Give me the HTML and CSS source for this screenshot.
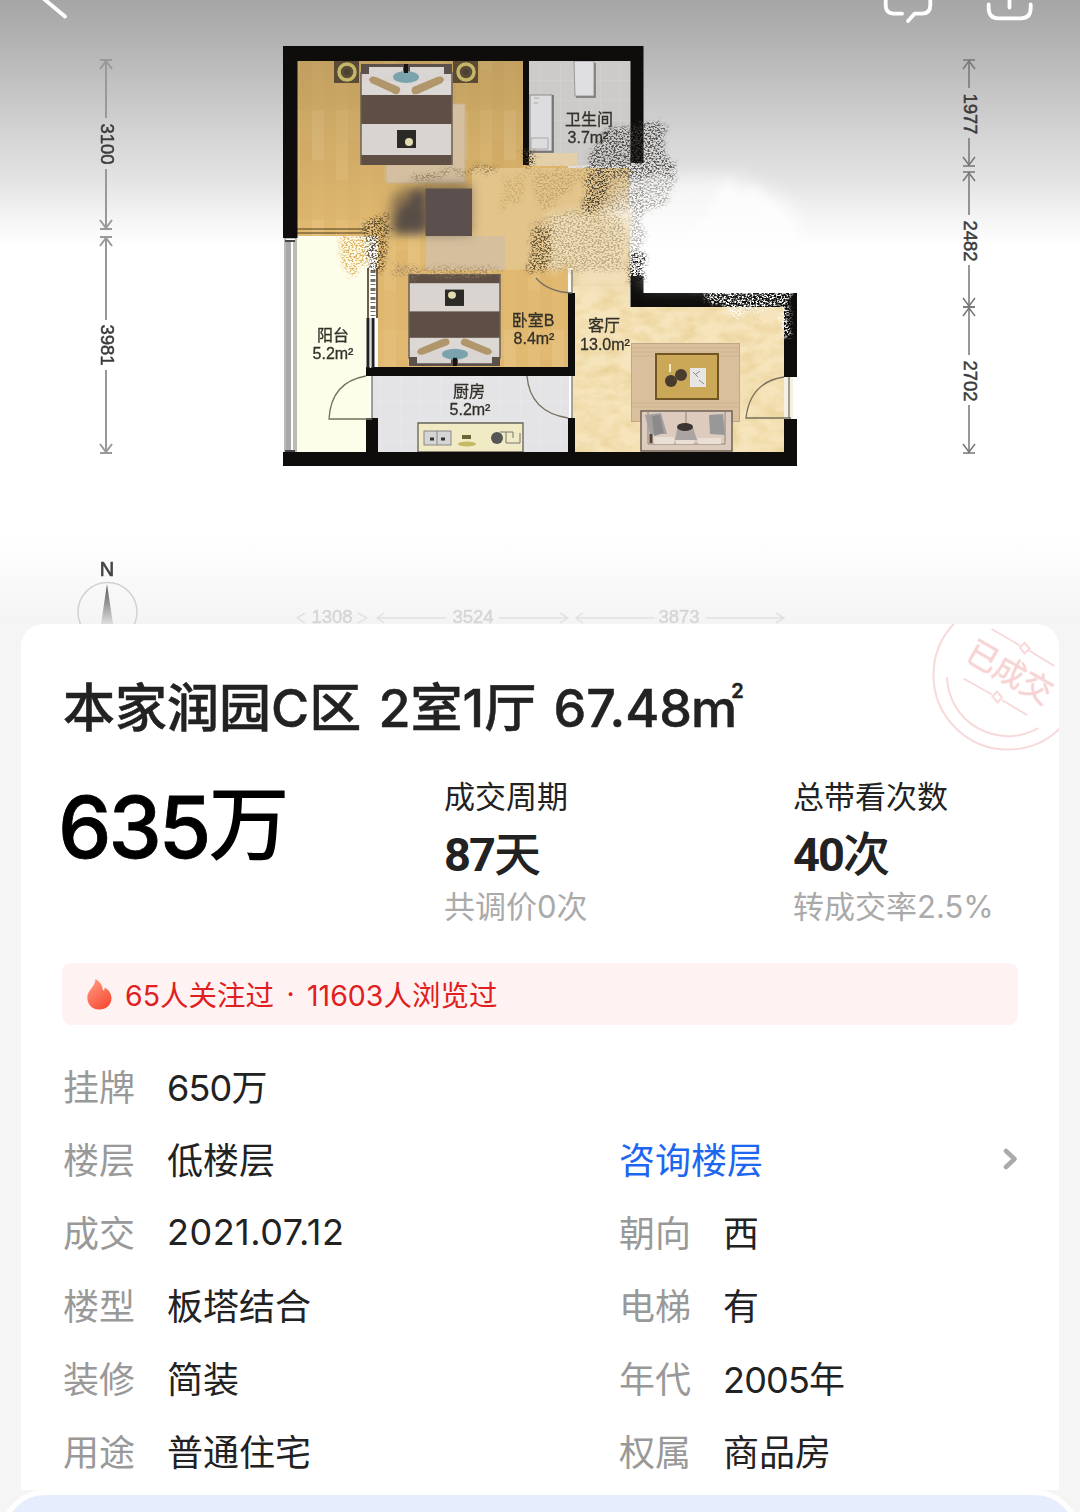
FILE: index.html
```
<!DOCTYPE html>
<html lang="zh-CN">
	<head>
		<meta charset="utf-8">
		<title>本家润园C区 2室1厅 67.48㎡</title>
		<link rel="stylesheet" href="styles.css">
	</head>
	<body>

		<!--
			Floor plan with the navigation icons on top
		-->

		<header class="plan">
			<svg class="plan-svg" width="1080" height="624" viewBox="0 0 1080 624">
				<defs>
					<linearGradient id="shadeTop" x1="0" y1="0" x2="0" y2="1">
						<stop offset="0" stop-color="#a6a6a6"/>
						<stop offset="0.16" stop-color="#b2b2b2"/>
						<stop offset="0.33" stop-color="#c1c1c1"/>
						<stop offset="0.53" stop-color="#d3d3d3"/>
						<stop offset="0.72" stop-color="#e2e2e2"/>
						<stop offset="0.88" stop-color="#f4f4f4"/>
						<stop offset="1" stop-color="#ffffff"/>
					</linearGradient>
					<linearGradient id="shadeBottom" x1="0" y1="0" x2="0" y2="1">
						<stop offset="0" stop-color="#f5f5f5" stop-opacity="0"/>
						<stop offset="1" stop-color="#f4f4f4"/>
					</linearGradient>
					<linearGradient id="needle" x1="0" y1="0" x2="0" y2="1">
						<stop offset="0" stop-color="#555"/>
						<stop offset="1" stop-color="#ddd"/>
					</linearGradient>
					<linearGradient id="woodShade" x1="0" y1="0" x2="0" y2="1">
						<stop offset="0" stop-color="#4a4226" stop-opacity="0.2"/>
						<stop offset="1" stop-color="#4a4226" stop-opacity="0"/>
					</linearGradient>
					<pattern id="wood" width="48" height="110" patternUnits="userSpaceOnUse">
						<rect width="48" height="110" fill="#e1b970"/>
						<rect width="12" height="70" fill="#e4be78"/>
						<rect x="12" y="30" width="12" height="80" fill="#dfb66d"/>
						<rect x="24" width="12" height="50" fill="#e5c07c"/>
						<rect x="36" y="50" width="12" height="60" fill="#e0b76e"/>
					</pattern>
					<pattern id="tile" width="20" height="20" patternUnits="userSpaceOnUse">
						<path d="M0 0H20M0 0V20" stroke="#fff" stroke-width="1" opacity="0.2"/>
					</pattern>
					<filter id="stone" x="0" y="0" width="1" height="1" color-interpolation-filters="sRGB">
						<feTurbulence type="fractalNoise" baseFrequency="0.05 0.09" numOctaves="3" seed="4"/>
						<feColorMatrix values="0 0 0 0 0.91  0 0 0 0 0.81  0 0 0 0 0.58  1.6 0 0 0 -0.55"/>
						<feComposite in2="SourceGraphic" operator="in" result="s"/>
						<feMerge><feMergeNode in="SourceGraphic"/><feMergeNode in="s"/></feMerge>
					</filter>
					<filter id="chalk" x="-0.1" y="-0.1" width="1.2" height="1.2" color-interpolation-filters="sRGB">
						<feTurbulence type="fractalNoise" baseFrequency="0.5 0.6" numOctaves="3" seed="7" result="n"/>
						<feTurbulence type="fractalNoise" baseFrequency="0.07" numOctaves="2" seed="3" result="w"/>
						<feColorMatrix in="n" values="0 0 0 0 0  0 0 0 0 0  0 0 0 0 0  6 0 0 0 -2.7" result="m"/>
						<feDisplacementMap in="SourceGraphic" in2="w" scale="14" xChannelSelector="R" yChannelSelector="G" result="d"/>
						<feDisplacementMap in="d" in2="n" scale="16" xChannelSelector="G" yChannelSelector="B" result="e"/>
						<feGaussianBlur in="e" stdDeviation="1" result="f"/>
						<feComposite in="f" in2="m" operator="in"/>
					</filter>
					<filter id="rough" x="-0.1" y="-0.1" width="1.2" height="1.2" color-interpolation-filters="sRGB">
						<feTurbulence type="fractalNoise" baseFrequency="0.08" numOctaves="3" seed="2" result="n"/>
						<feDisplacementMap in="SourceGraphic" in2="n" scale="20" xChannelSelector="R" yChannelSelector="G" result="d"/>
						<feGaussianBlur in="d" stdDeviation="4"/>
					</filter>
					<filter id="soft" x="-0.3" y="-0.3" width="1.6" height="1.6"><feGaussianBlur stdDeviation="6"/></filter>
					<filter id="softer" x="-0.3" y="-0.3" width="1.6" height="1.6"><feGaussianBlur stdDeviation="9"/></filter>

					<!-- arrow head that ends a dimension line, pointing up -->
					<path id="tip" d="M-6 0H6M-6 9L0 1L6 9"/>

					<!-- double bed, head on top -->
					<g id="bed">
						<rect width="91" height="101" fill="#d9d4d0"/>
						<path d="M0 0H91V10H0Z" fill="#5b504a"/>
						<path d="M8 3H42V12H8ZM49 3H83V12H49Z" fill="#d8d5d2"/>
						<path d="M0 17H91V30H0Z" fill="#dcd8d5"/>
						<ellipse cx="45" cy="13" rx="13" ry="6" fill="#7ba3ad"/>
						<path d="M8 16Q9 11 15 13L38 23Q41 26 37 30Q34 31 30 28L10 19Z" fill="#b1966b"/>
						<path d="M83 16Q82 11 76 13L52 23Q49 26 52 30Q55 31 59 29L81 19Z" fill="#b1966b"/>
						<rect x="43" y="0" width="4" height="9" fill="#171412"/>
						<rect y="31" width="91" height="29" fill="#5e4e44"/>
						<rect y="91" width="91" height="10" fill="#5e4e44"/>
						<rect x="36" y="66" width="19" height="18" fill="#2b2a26"/>
						<circle cx="48" cy="78" r="4" fill="#e2dcae"/>
						<path d="M0 8V101M91 8V101" stroke="#6b5f55" stroke-width="1.5"/>
					</g>
					<g id="lamp">
						<rect width="25" height="22" fill="#5a4a36"/>
						<circle cx="13" cy="11" r="8" fill="none" stroke="#c4b868" stroke-width="3.5"/>
						<circle cx="13" cy="11" r="3" fill="#4a4231"/>
					</g>
				</defs>

				<rect width="1080" height="624" fill="#fff"/>
				<rect width="1080" height="247" fill="url(#shadeTop)"/>

				<!-- floors -->
				<path d="M297 61H523V165H568V367H378V236H297Z" fill="url(#wood)"/>
				<rect x="297" y="61" width="226" height="172" fill="url(#woodShade)"/>
				<rect x="529" y="61" width="102" height="104" fill="#cdcbc9"/>
				<rect x="529" y="61" width="102" height="104" fill="url(#tile)"/>
				<rect x="296" y="237" width="74" height="215" fill="#fdfeea"/>
				<rect x="372" y="376" width="197" height="76" fill="#e4e3e6"/>
				<rect x="372" y="376" width="197" height="76" fill="url(#tile)"/>
				<path d="M573 240H630V307H784V452H573Z" fill="#f6e5bc" filter="url(#stone)"/>
				<rect x="784" y="377" width="9" height="42" fill="#f4f1e4"/>
				<path d="M472 168H630V286H573V268L510 270L472 240Z" fill="#e3c48b"/>
				<path d="M530 153H577V166H530Z" fill="#e3cfa8"/>
				<path d="M548 215L628 205V290H573V268H548Z" fill="#f0dfb8" filter="url(#rough)"/>

				<!-- bedroom A -->
				<path d="M450 104H465V183H386V165H450Z" fill="#d4c0a0" stroke="#c9b28c"/>
				<use href="#bed" x="361" y="64"/>
				<use href="#lamp" x="334" y="61"/>
				<use href="#lamp" x="453" y="61"/>
				<path d="M297 229H366M297 233H366" stroke="#4c3d1d" stroke-width="1.2"/>

				<!-- bedroom B -->
				<use href="#bed" transform="translate(500 366) scale(-1 -0.91)"/>

				<!-- painted over area between the bedrooms -->
				<rect x="426" y="236" width="79" height="34" fill="#d5bf9d"/>
				<path d="M392 196Q410 180 471 184V234H388Z" fill="#55493d" opacity="0.6" filter="url(#soft)"/>
				<path d="M400 206Q410 194 425 191V234H396Q392 220 400 206Z" fill="#4c4443" opacity="0.8" filter="url(#rough)"/>
				<rect x="425.500" y="188.500" width="46.500" height="47.500" fill="#5b504e"/>

				<!-- bathroom -->
				<path d="M574 61H594V96H575Z" fill="#dfdfe1" stroke="#999" stroke-width="1"/>
				<path d="M595 63V97H576" fill="none" stroke="#77736e" stroke-width="1.500"/>
				<rect x="530" y="95" width="22" height="56" fill="#dddde0" stroke="#8d8b89"/>
				<path d="M553 95V152H530" fill="none" stroke="#686765" stroke-width="1.500"/>
				<path d="M531 138H548V149H531ZM534 98H539M534 103H538" fill="none" stroke="#aaa"/>

				<!-- kitchen counter -->
				<path d="M418 423H523V452H418Z" fill="#f0ebc4" stroke="#66635a" stroke-width="1.300"/>
				<rect x="424" y="431" width="27" height="14" fill="#d5d5d5" stroke="#888"/>
				<path d="M437 431V445" stroke="#888"/>
				<path d="M430 439H434M441 439H445" stroke="#333" stroke-width="3"/>
				<path d="M462 437H471" stroke="#6c6538" stroke-width="4"/>
				<ellipse cx="467" cy="444" rx="9" ry="2.500" fill="#c6b966"/>
				<circle cx="497" cy="438" r="6" fill="#555"/>
				<path d="M500 432H513V438M506 432V443H520V433" fill="none" stroke="#777"/>

				<!-- living room -->
				<rect x="631.500" y="343.500" width="108" height="78" fill="#d9bf9c" stroke="#bfa787"/>
				<path d="M632 348H739M632 352H739M632 356H739M632 403H739M632 407H739" stroke="#cdb18d" stroke-width="0.800"/>
				<rect x="656" y="354" width="62" height="45" fill="#cba857" stroke="#705526" stroke-width="2"/>
				<circle cx="671" cy="381" r="6" fill="#463b2c"/>
				<circle cx="681" cy="375" r="6" fill="#4a3d30"/>
				<path d="M670 364V372" stroke="#f2eac6" stroke-width="2"/>
				<rect x="690" y="368" width="16" height="19" fill="#e8e6e2"/>
				<path d="M693 372L698 377M696 374L700 371M699 380L704 384" stroke="#889"/>
				<rect x="641" y="411" width="91" height="40" fill="#ddccbe" stroke="#6f6156" stroke-width="1.500"/>
				<path d="M648 411V444H725V411M686 411V444" fill="none" stroke="#8f8277"/>
				<path d="M645 415L661 413L667 434L650 434Z" fill="#a3a09f"/>
				<path d="M652 416L660 415L664 433L654 436Z" fill="#8d8a8b"/>
				<path d="M709 415L723 414L725 435L710 434Z" fill="#98989b"/>
				<path d="M678 424H692L697 440H675Z" fill="#aaa5a3"/>
				<ellipse cx="685" cy="427" rx="8" ry="4" fill="#3d3431"/>
				<path d="M654 437H674V444H654ZM676 440H694V444H676ZM698 438H721V444H698Z" fill="#eadfd5"/>
				<path d="M651 434V443" stroke="#4e423b" stroke-width="3"/>

				<!-- balcony window -->
				<rect x="285" y="238" width="11" height="215" fill="#fff" stroke="#777" stroke-width="1"/>
				<rect x="286" y="242" width="5" height="209" fill="#a8a8a8"/>
				<path d="M294 240V452" stroke="#777"/>
				<path d="M285 241H295M285 451H295" stroke="#444" stroke-width="2"/>

				<!-- walls -->
				<g class="wall">
					<path d="M283 46H643.500V163H630.500V61H529V165H523V61H297.500V238H283Z"/>
					<path d="M630.500 276H643.500V293H797V377H784V307H630.500Z"/>
					<path d="M784 419H797V466H283V452H366V418H378V452H568V418H575V452H784Z"/>
					<path d="M366 367H568V293H575V376H366Z"/>
				</g>
				<path d="M368 318V368M373 318V368" stroke="#222" stroke-width="3"/>
				<path d="M370.500 318V368" stroke="#ddd" stroke-width="1.500"/>
				<path d="M368 268V318M377 268V318" stroke="#3a2d18" stroke-width="1.500"/>
				<path d="M373 270V316" stroke="#2e2312" stroke-width="5" stroke-dasharray="3 2 1 3" opacity="0.65"/>

				<!-- doors -->
				<g class="door">
					<path d="M366 376Q331 382 329 419H372M372 376V418"/>
					<path d="M527 376Q530 412 568 418M572 376V418"/>
					<path d="M784 377Q750 382 746 418H791M789 377V418"/>
					<path d="M536 278Q548 292 572 293M572 270V293"/>
				</g>

				<!-- brush and chalk marks -->
				<path d="M614 196L636 180L690 176H740L796 206V270L760 284H643V262L630 250V226L612 220Z" fill="#fff" opacity="0.6" filter="url(#softer)"/>
				<path d="M720 186L760 190L795 222L796 275L690 286L682 246L705 218Z" fill="#fff" opacity="0.6" filter="url(#rough)"/>
				<g filter="url(#chalk)">
					<path d="M606 128L668 122L664 158L678 164L672 174L590 180L586 160Z" fill="#3e3c39" opacity="0.85"/>
					<path d="M596 172L676 168L668 200L664 206L586 216L580 204Z" fill="#6c675c" opacity="0.5"/>
					<path d="M585 178L610 172L602 210L582 214Z" fill="#4b4537"/>
					<path d="M532 225L570 210L625 218L622 270L535 272Z" fill="#8d7850" opacity="0.5"/>
					<path d="M532 232L556 226L548 270L528 272Z" fill="#5c4c2d" opacity="0.9"/>
					<path d="M530 170L600 168L570 190L540 214Z" fill="#9a7a3f" opacity="0.4"/>
					<path d="M500 178L530 172L520 200L500 215Z" fill="#b18c48" opacity="0.4"/>
					<path d="M630 186H643V276H630Z" fill="#8b877f" opacity="0.6"/>
					<path d="M630 252H644V284H630Z" fill="#1a1917"/>
					<path d="M366 226L388 212L384 270L367 270Z" fill="#4d3e24" opacity="0.9"/>
					<path d="M336 238L366 232V262L350 280Z" fill="#dda84f" opacity="0.85"/>
					<path d="M410 174L500 164L498 170L412 180Z" fill="#76613a" opacity="0.7"/>
					<path d="M392 266L500 268V274L392 276Z" fill="#9c8765" opacity="0.8"/>
					<path d="M524 150L532 150V168H524Z" fill="#4c3d20"/>
				</g>
				<g filter="url(#chalk)">
					<path d="M700 290H790V336H783V308L735 316L715 306Z" fill="#fff"/>
					<path d="M706 292H762L752 308H720Z" fill="#fff"/>
				</g>

				<!-- room names -->
				<g class="room">
					<text x="589" y="125">卫生间</text>
					<text x="588" y="143" class="area">3.7m²</text>
					<text x="333" y="341">阳台</text>
					<text x="333" y="359" class="area">5.2m²</text>
					<text x="533" y="326">卧室B</text>
					<text x="534" y="344" class="area">8.4m²</text>
					<text x="604" y="331">客厅</text>
					<text x="605" y="350" class="area">13.0m²</text>
					<text x="469" y="397">厨房</text>
					<text x="470" y="415" class="area">5.2m²</text>
				</g>

				<!-- dimensions -->
				<g class="dim dim-left">
					<path d="M106 60V118M106 169V229M106 237V320M106 370V453"/>
					<use href="#tip" x="106" y="60"/>
					<use href="#tip" transform="translate(106 229) scale(1 -1)"/>
					<use href="#tip" x="106" y="237"/>
					<use href="#tip" transform="translate(106 453) scale(1 -1)"/>
				</g>
				<g class="dim dim-right">
					<path d="M969 60V88M969 138V166M969 172V215M969 265V355M969 405V453"/>
					<use href="#tip" x="969" y="60"/>
					<use href="#tip" transform="translate(969 166) scale(1 -1)"/>
					<use href="#tip" x="969" y="172"/>
					<use href="#tip" transform="translate(969 307) scale(1 -1)"/>
					<use href="#tip" x="969" y="307"/>
					<use href="#tip" transform="translate(969 453) scale(1 -1)"/>
				</g>
				<g class="dim-text">
					<text transform="translate(101 144) rotate(90)">3100</text>
					<text transform="translate(101 345) rotate(90)">3981</text>
					<text transform="translate(963.500 114) rotate(90)">1977</text>
					<text transform="translate(963.500 241) rotate(90)">2482</text>
					<text transform="translate(963.500 381) rotate(90)">2702</text>
				</g>

				<rect y="535" width="1080" height="89" fill="url(#shadeBottom)"/>
				<g class="dim dim-faint">
					<path d="M305 613L297 618L305 623M358 613L367 618L358 623M384 613L377 618L384 623M377 618H446M499 618H568M560 613L568 618L560 623M583 613L576 618L583 623M576 618H655M706 618H785M776 613L784 618L776 623"/>
				</g>
				<g class="dim-text dim-text-faint">
					<text x="332" y="623">1308</text>
					<text x="473" y="623">3524</text>
					<text x="679" y="623">3873</text>
				</g>

				<!-- compass -->
				<text class="north" x="107" y="576">N</text>
				<circle cx="107.500" cy="612" r="29.500" fill="none" stroke="#d2d2d2" stroke-width="1.500"/>
				<path d="M107 584L113 624H101Z" fill="url(#needle)"/>

				<!-- back, message, share -->
				<g class="nav-icon">
					<path d="M38 -6L65 16.500"/>
					<path d="M885.700 -4V5Q885.700 13.700 894 13.700H902M908 21L914.500 13.700H922Q930.300 13.700 930.300 5V-4"/>
					<path d="M988.700 4.500V8Q988.700 18.300 998 18.300H1021Q1030.700 18.300 1030.700 8V4.500M1009.500 -4V7.500"/>
				</g>
			</svg>
		</header>

		<!--
			Deal card
		-->

		<main class="card">
			<svg class="stamp" width="130" height="130" viewBox="929 624 130 130">
				<circle cx="1008" cy="675" r="74.500"/>
				<path d="M947 677A61 61 0 0 0 1038.500 728"/>
				<path d="M991.500 629L1020 645.500M1029 650.500L1054.500 666M963.500 678.500L992 694.500M1002 700L1027 715"/>
				<path d="M1024.500 643L1029.500 648.500L1024.500 653.500L1020 647.500ZM997 691.500L1002 697.500L997.500 702.500L992.500 696.500Z"/>
				<text transform="translate(1010 672) rotate(30)" x="0" y="11">已成交</text>
			</svg>

			<h1 class="title">本家润园C区 2室1厅 67.48<span class="unit">m<sup>2</sup></span></h1>

			<section class="stats">
				<div class="price"><span class="price-num">635</span><span class="price-unit">万</span></div>
				<div class="stat">
					<p class="stat-name">成交周期</p>
					<p class="stat-value"><b>87</b>天</p>
					<p class="stat-note">共调价0次</p>
				</div>
				<div class="stat">
					<p class="stat-name">总带看次数</p>
					<p class="stat-value"><b>40</b>次</p>
					<p class="stat-note">转成交率<span class="rate">2.5%</span></p>
				</div>
			</section>

			<section class="hot">
				<svg class="flame" width="25" height="31" viewBox="0 0 25 31">
					<defs>
						<linearGradient id="fire" x1="0" y1="0" x2="0.600" y2="1">
							<stop offset="0" stop-color="#ffa183"/>
							<stop offset="1" stop-color="#f94f3a"/>
						</linearGradient>
					</defs>
					<path d="M8.500 0C13 2.500 15.500 6.500 16 11.500C17.300 11 17.800 10 17.800 8.500C22 11 24.500 15 24.500 19C24.500 26 19 30.500 12.300 30.500C5.500 30.500 0.300 26 0.300 18.500C0.300 11 8 8.500 8.500 0Z" fill="url(#fire)"/>
				</svg>
				<span>65人关注过</span><span class="dot">·</span><span>11603人浏览过</span>
			</section>

			<section class="info">
				<div class="row"><span class="label">挂牌</span><span class="value"><span class="num">650</span>万</span></div>
				<div class="row"></div>
				<div class="row"><span class="label">楼层</span><span class="value">低楼层</span></div>
				<div class="row row-link">
					<a class="ask">咨询楼层</a>
					<svg width="16" height="22" viewBox="0 0 16 22"><path d="M4 3L12.500 11L4 19"/></svg>
				</div>
				<div class="row"><span class="label">成交</span><span class="value date">2021.07.12</span></div>
				<div class="row"><span class="label">朝向</span><span class="value">西</span></div>
				<div class="row"><span class="label">楼型</span><span class="value">板塔结合</span></div>
				<div class="row"><span class="label">电梯</span><span class="value">有</span></div>
				<div class="row"><span class="label">装修</span><span class="value">简装</span></div>
				<div class="row"><span class="label">年代</span><span class="value"><span class="num">2005</span>年</span></div>
				<div class="row"><span class="label">用途</span><span class="value">普通住宅</span></div>
				<div class="row"><span class="label">权属</span><span class="value">商品房</span></div>
			</section>
		</main>

		<div class="sheet"></div>

	</body>
</html>
```
FILE: styles.css
```
/*
	page
*/

* {
	box-sizing: border-box;
}

body {
	margin: 0;
	height: 1512px;
	overflow: hidden;
	background-color: #f5f5f5;
	color: #222;
	font-family: Inter, "Noto Sans CJK SC", sans-serif;
}

h1, p {
	margin: 0;
}

/*
	floor plan
*/

.plan {
	height: 624px;
}

.plan-svg {
	display: block;
	overflow: visible;
}

.wall {
	fill: #0e0d0b;
}

.door {
	fill: none;
	stroke: #77705f;
	stroke-width: 1.3;
}

.room {
	font-family: "Liberation Sans", "Noto Sans CJK SC", sans-serif;
	font-size: 16px;
	fill: #33302a;
	stroke: #33302a;
	stroke-width: 0.3;
	text-anchor: middle;
}

.area {
	font-size: 16px;
}

.dim {
	fill: none;
	stroke-width: 1.5;
}

.dim-left {
	stroke: #999;
	stroke-width: 2;
}

.dim-right {
	stroke: #777;
}

.dim-faint {
	stroke: #e2e2e2;
}

.dim-text {
	font-family: "Liberation Sans", sans-serif;
	font-size: 18.5px;
	fill: #3a3a3a;
	stroke: #3a3a3a;
	stroke-width: 0.5;
	text-anchor: middle;
}

.dim-text-faint {
	fill: #d6d6d6;
	stroke: #d6d6d6;
}

.north {
	font-family: "Liberation Sans", sans-serif;
	font-size: 20px;
	fill: #444;
	stroke: #444;
	stroke-width: 0.7;
	text-anchor: middle;
}

.nav-icon {
	fill: none;
	stroke: #fff;
	stroke-width: 3.8;
	stroke-linecap: round;
	stroke-linejoin: round;
}

/*
	deal card
*/

.card {
	position: relative;
	height: 866px;
	margin: 0 21px;
	padding: 51px 41px 0;
	background-color: #fff;
	border-radius: 22px 22px 0 0;
	overflow: hidden;
}

.stamp {
	position: absolute;
	top: 0;
	right: 0;
	fill: none;
	stroke: #f7d9d9;
	stroke-width: 2;
}

.stamp text {
	fill: #f6d2d2;
	stroke: #f6d2d2;
	stroke-width: 0.5;
	font-size: 31px;
	font-weight: 400;
	text-anchor: middle;
}

.title {
	height: 68px;
	padding-left: 1px;
	font-size: 52px;
	font-weight: 500;
	line-height: 68px;
	word-spacing: 3.5px;
	white-space: nowrap;
	-webkit-text-stroke: 0.5px #222;
}

.unit {
	margin-left: -1px;
}

.unit sup {
	margin-left: -6px;
	font-size: 20px;
	font-weight: 600;
	line-height: 0;
	vertical-align: 29px;
}

/*
	price and the two statistics
*/

.stats {
	display: grid;
	grid-template-columns: 382px 349px 1fr;
	height: 220px;
	padding-top: 32px;
}

.price {
	margin: 3px 0 0 -4px;
	color: #000;
	font-size: 81px;
	font-weight: 500;
	line-height: 100px;
	white-space: nowrap;
}

.price-num {
	font-size: 85px;
	letter-spacing: -3px;
	-webkit-text-stroke: 0.8px #000;
}

.price-unit {
	line-height: 0;
	vertical-align: 5px;
}

.stat {
	white-space: nowrap;
}

.stat-name {
	font-size: 31px;
	line-height: 44px;
}

.stat-value {
	font-size: 47px;
	font-weight: 500;
	line-height: 70px;
}

.stat-value b {
	font-family: Roboto, sans-serif;
	letter-spacing: -2px;
}

.stat-note {
	color: #aaa;
	font-size: 31px;
	line-height: 33px;
}

/*
	followers banner
*/

.hot {
	display: flex;
	align-items: center;
	height: 62px;
	padding: 0 0 2px 25px;
	border-radius: 9px;
	background-color: #fff2f2;
	color: #e02020;
	font-size: 28.5px;
}

.flame {
	margin: 2px 13px 0 0;
}

.dot {
	width: 33px;
	text-align: center;
}

/*
	details
*/

.info {
	display: grid;
	grid-template-columns: 556px 1fr;
	grid-auto-rows: 73px;
	margin-top: 23px;
	padding-left: 1px;
	font-size: 36px;
}

.row {
	display: flex;
	align-items: center;
}

.row-link {
	justify-content: space-between;
}

.row-link svg {
	margin-top: 3px;
	fill: none;
	stroke: #aaa;
	stroke-width: 4.5;
	stroke-linecap: round;
	stroke-linejoin: round;
}

.label {
	width: 104px;
	color: #999;
}

.num {
	letter-spacing: -0.8px;
}

.date {
	padding-top: 3px;
	letter-spacing: 0.5px;
}

.ask {
	color: #1c66f0;
}

/*
	top edge of the next block
*/

.sheet {
	height: 90px;
	border: 5px solid #fff;
	border-radius: 45px 45px 0 0;
	background-color: #e6eefd;
}
```
